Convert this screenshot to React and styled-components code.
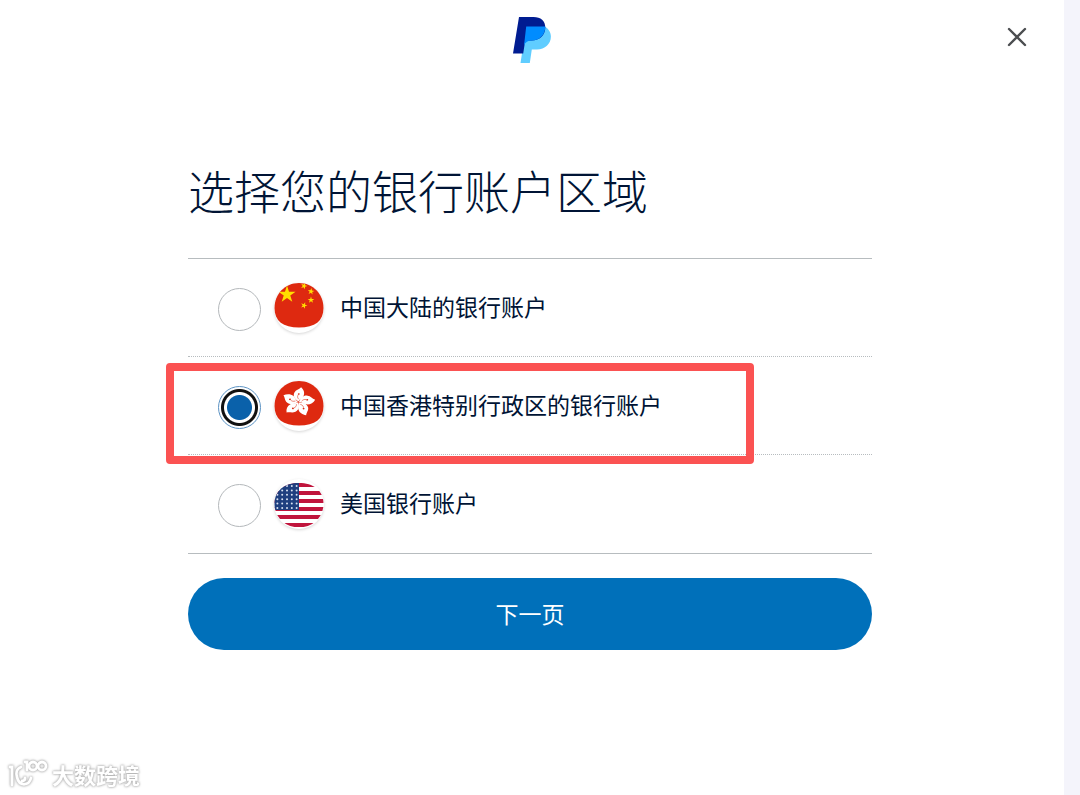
import React, { Component } from 'react';
import styled, { createGlobalStyle } from 'styled-components';

const ChinaFlag = () => (
  <FlagArt viewBox="0 0 50 50" aria-hidden="true">
    <defs>
      <clipPath id="cnClip">
        <path d="M25 0C39 0 49.5 11 49.5 25C49.5 38 41 44.5 25 44.5C9 44.5 0.5 38 0.5 25C0.5 11 11 0 25 0Z" />
      </clipPath>
    </defs>
    <g clipPath="url(#cnClip)">
      <rect width="50" height="50" fill="#de2910" />
      <g fill="#ffde00">
        <Star x={13} y={11.5} r={9} />
        <Star x={30} y={3} r={3.5} turn={20} />
        <Star x={37} y={8.5} r={3.5} turn={8} />
        <Star x={37} y={17} r={3.5} />
        <Star x={30} y={22.5} r={3.5} turn={20} />
      </g>
    </g>
  </FlagArt>
);

const Star = ({ x, y, r, turn = 0 }) => (
  <path
    transform={`translate(${x} ${y}) rotate(${turn}) scale(${r})`}
    d="M0-1L.225-.309L.951-.309L.363.118L.588.809L0 .382L-.588.809L-.363.118L-.951-.309L-.225-.309Z"
  />
);

const HongKongFlag = () => (
  <FlagArt viewBox="0 0 50 50" aria-hidden="true">
    <path
      fill="#de2910"
      d="M25 0C39 0 49.5 11 49.5 25C49.5 38 41 44.5 25 44.5C9 44.5 0.5 38 0.5 25C0.5 11 11 0 25 0Z"
    />
    <g transform="translate(24.5 21) scale(1.08 0.95)">
      {[6, 78, 150, 222, 294].map(angle => (
        <g key={angle} transform={`rotate(${angle})`}>
          <path
            fill="#fff"
            d="M0 -0.5C-4 -2.5 -6 -6 -4.8 -9.5C-3.8 -12.5 -1 -13 0.8 -15.6C3.5 -13.5 5 -10 4 -6.8C3.2 -4.2 0.6 -3.5 0 -0.5Z"
          />
          <path
            fill="none"
            stroke="#de2910"
            strokeWidth="0.5"
            d="M-0.2 -3C-1.6 -4.6 -1.8 -6 -1 -7.5"
          />
          <circle cx="-0.6" cy="-8.4" r="0.9" fill="#de2910" />
        </g>
      ))}
    </g>
  </FlagArt>
);

const UsFlag = () => (
  <FlagArt viewBox="0 0 50 50" aria-hidden="true">
    <defs>
      <clipPath id="usClip">
        <path d="M25 4C39 4 49.5 11 49.5 25C49.5 38 39 48.5 25 48.5C11 48.5 0.5 38 0.5 25C0.5 11 11 4 25 4Z" />
      </clipPath>
    </defs>
    <g clipPath="url(#usClip)">
      <rect width="50" height="50" fill="#fff" />
      {[0, 1, 2, 3, 4, 5].map(i => (
        <rect key={i} y={4 + i * 8} width="50" height="4" fill="#c0143c" />
      ))}
      <rect y="4" width="25" height="27" fill="#1f3f7f" />
      {[0, 1, 2, 3, 4, 5].map(row =>
        [0, 1, 2, 3, 4].map(col => (
          <circle
            key={`${row}-${col}`}
            cx={3.4 + col * 4.8}
            cy={7 + row * 4.4}
            r="1"
            fill="#d9e2f2"
          />
        ))
      )}
    </g>
  </FlagArt>
);

const PayPalLogo = () => (
  <svg width="38" height="46" viewBox="0 0 38 46" role="img" aria-label="PayPal">
    <path
      fill="#60cdff"
      d="M31.5 9.5C35.5 11.5 37.9 15.4 37.9 19.6C37.9 27 32 32.5 24 32.5H18.8L16.8 46H7.5L13.2 9.5Z"
    />
    <path
      fill="#001c91"
      d="M6 0H20.5C27.8 0 32.3 4 32.3 10.5C32.3 18.2 26.5 23.5 18.5 23.5H12.2L10.2 36.6H0Z"
    />
    <path
      fill="#008cff"
      d="M13.2 9.5H32.2C32.5 17.5 26.8 23.5 18.5 23.5C15 23.5 12.4 25 11 28.5Z"
    />
  </svg>
);

const CloseIcon = () => (
  <svg width="20" height="20" viewBox="0 0 20 20" aria-hidden="true">
    <path
      d="M2 2L18 18M18 2L2 18"
      stroke="#4b4d50"
      strokeWidth="2.4"
      strokeLinecap="round"
    />
  </svg>
);

const WatermarkLogo = () => (
  <svg width="40" height="30" viewBox="0 0 40 30" fill="none" aria-hidden="true">
    <g stroke="#fff" strokeWidth="2.8" strokeLinecap="round">
      <path d="M2 8H4V26" />
      <path d="M13 8C8 10 8 15 9 18C11 28 21 27 23 19M17 19C17 21 16 22 14 22" />
      <path d="M17 3H19V11" />
      <circle cx="25" cy="7" r="4" />
      <circle cx="34" cy="7" r="4" />
    </g>
  </svg>
);

const regions = [
  { id: 'cn', label: '中国大陆的银行账户', Flag: ChinaFlag },
  { id: 'hk', label: '中国香港特别行政区的银行账户', Flag: HongKongFlag },
  { id: 'us', label: '美国银行账户', Flag: UsFlag }
];

class App extends Component {
  constructor(props) {
    super(props);
    this.state = {
      region: 'hk'
    };
  }

  handleChange = event => {
    this.setState({
      region: event.target.value
    });
  };

  handleSubmit = event => {
    event.preventDefault();
  };

  render() {
    return (
      <Page>
        <GlobalStyle />
        <Header>
          <PayPalLogo />
          <CloseButton type="button" aria-label="关闭">
            <CloseIcon />
          </CloseButton>
        </Header>
        <Content>
          <Title>选择您的银行账户区域</Title>
          <form onSubmit={this.handleSubmit}>
            <RegionList>
              {regions.map(({ id, label, Flag }) => (
                <RegionRow key={id}>
                  <RegionLabel htmlFor={id}>
                    <Radio
                      type="radio"
                      id={id}
                      name="region"
                      value={id}
                      checked={this.state.region === id}
                      onChange={this.handleChange}
                    />
                    <FlagBadge>
                      <Flag />
                    </FlagBadge>
                    <RegionName>{label}</RegionName>
                  </RegionLabel>
                  {id === 'hk' && <Highlight />}
                </RegionRow>
              ))}
            </RegionList>
            <NextButton type="submit">下一页</NextButton>
          </form>
        </Content>
        <Watermark>
          <WatermarkLogo />
          大数跨境
        </Watermark>
      </Page>
    );
  }
}

//------------Styles-------------

const GlobalStyle = createGlobalStyle`
  * {
    box-sizing: border-box;
  }
  body {
    margin: 0;
    background: #fff;
    color: #001435;
    font-family: 'Noto Sans CJK SC', sans-serif;
  }
`;

const Page = styled.div`
  position: relative;
  min-height: 100vh;
  border-right: 16px solid #f4f4fb;
`;

const Header = styled.header`
  position: relative;
  display: flex;
  justify-content: center;
  padding: 17px 0;
`;

const CloseButton = styled.button`
  position: absolute;
  top: 22px;
  right: 32px;
  display: flex;
  padding: 5px;
  border: none;
  background: transparent;
  cursor: pointer;
`;

const Content = styled.main`
  width: 100%;
  max-width: 688px;
  margin: 0 auto;
  padding: 75px 4px 0 0;
`;

const Title = styled.h1`
  margin: 0 0 35px;
  font-size: 46px;
  font-weight: 300;
  line-height: 68px;
`;

const RegionList = styled.ul`
  margin: 0 0 24px;
  padding: 0;
  list-style: none;
  border-top: 1px solid #b7bcbf;
  border-bottom: 1px solid #b7bcbf;
`;

const RegionRow = styled.li`
  position: relative;
  & + & {
    border-top: 1px dotted #b7bcbf;
  }
  &:last-child {
    padding-bottom: 1px;
  }
`;

const RegionLabel = styled.label`
  display: flex;
  align-items: center;
  height: 97px;
  padding-left: 30px;
  cursor: pointer;
`;

const RegionName = styled.span`
  padding-bottom: 4px;
  font-size: 23px;
  font-weight: 400;
  line-height: 34px;
`;

const Radio = styled.input`
  appearance: none;
  width: 43px;
  height: 43px;
  margin: 3px 13px 0 0;
  border: 1px solid #b4b8bb;
  border-radius: 50%;
  background: #fff;
  &:checked {
    border-color: #5c93c4;
    background: radial-gradient(
      circle,
      #0a61aa 12px,
      #fff 13px,
      #fff 15px,
      #111 16px,
      #111 18px,
      #fff 19px
    );
  }
`;

const FlagBadge = styled.span`
  display: flex;
  width: 50px;
  height: 50px;
  margin-right: 16px;
  border-radius: 50%;
  background: #fff;
  box-shadow: 0 1px 3px rgba(0, 0, 0, 0.16);
`;

const FlagArt = styled.svg`
  width: 100%;
  height: 100%;
`;

const Highlight = styled.span`
  position: absolute;
  top: 6px;
  right: 118px;
  bottom: -10px;
  left: -22px;
  border: 8px solid #fb5252;
  border-radius: 4px;
  pointer-events: none;
  z-index: 1;
`;

const NextButton = styled.button`
  width: 100%;
  height: 72px;
  border: none;
  border-radius: 36px;
  background: #0070ba;
  color: #fff;
  font-family: inherit;
  font-size: 23px;
  font-weight: 400;
  padding: 0 0 2px;
  cursor: pointer;
`;

const Watermark = styled.div`
  position: absolute;
  bottom: 5px;
  left: 8px;
  display: flex;
  align-items: center;
  gap: 4px;
  color: #fff;
  font-size: 22px;
  font-weight: 700;
  line-height: 32px;
  filter: drop-shadow(0 0 1px #aaa) drop-shadow(0 0 1px #ccc);
`;

//----------------------End Styles--------------------
export default App;
